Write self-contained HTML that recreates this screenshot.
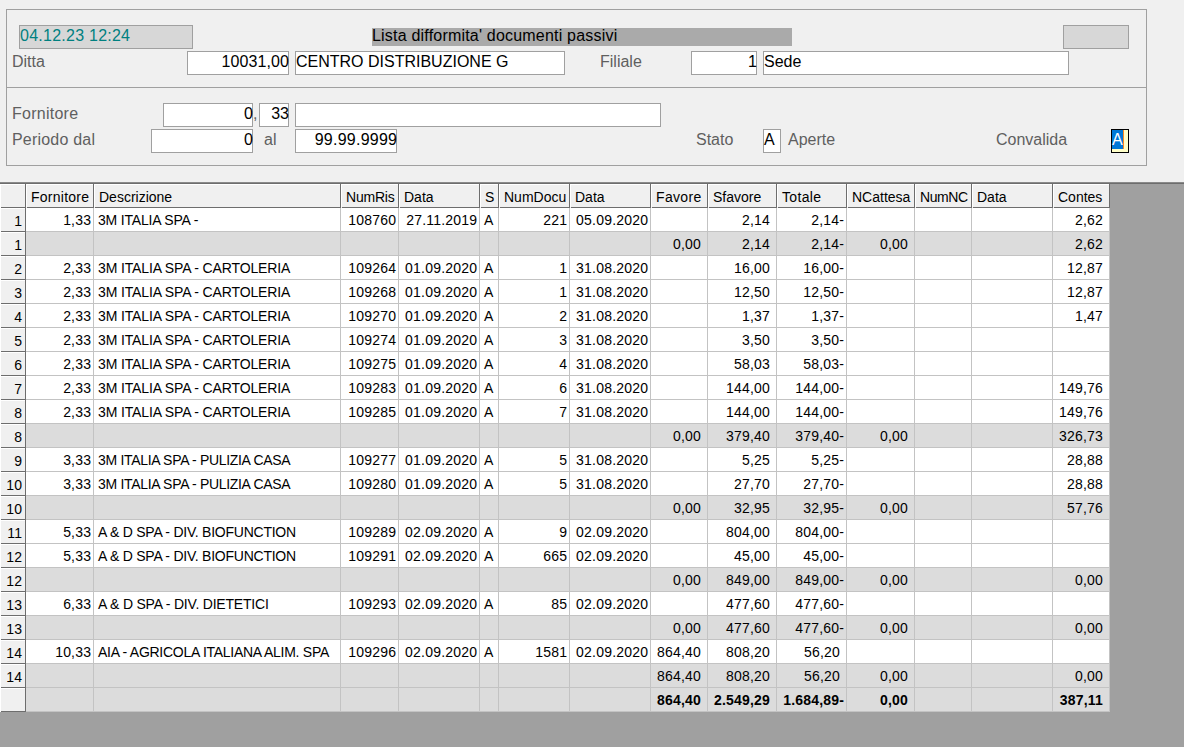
<!DOCTYPE html>
<html><head><meta charset="utf-8"><style>
html,body{margin:0;padding:0;}
body{width:1184px;height:747px;position:relative;overflow:hidden;background:#f0f0f0;font-family:"Liberation Sans",sans-serif;}
.a{position:absolute;box-sizing:border-box;}
.t{position:absolute;white-space:nowrap;}
</style></head><body>
<div class="a" style="left:6px;top:9px;width:1141px;height:157px;box-shadow:inset 0 0 0 1px #a0a0a0;"></div><div class="a" style="left:7px;top:87px;width:1139px;height:1px;background:#a0a0a0;"></div><div class="a" style="left:19px;top:25px;width:174px;height:24px;background:#d7d7d7;box-shadow:inset 0 0 0 1px #a0a0a0;"></div><div class="t" style="top:28.46px;font-size:16px;line-height:16px;color:#008080;letter-spacing:0.25px;left:20px;">04.12.23 12:24</div><div class="a" style="left:372px;top:28px;width:420px;height:18px;background:#aaaaaa;"></div><div class="t" style="top:28.46px;font-size:16px;line-height:16px;color:#000;letter-spacing:0.2px;left:372px;">Lista difformita' documenti passivi</div><div class="a" style="left:1063px;top:25px;width:66px;height:24px;background:#d7d7d7;box-shadow:inset 0 0 0 1px #a0a0a0;"></div><div class="t" style="top:54.46px;font-size:16px;line-height:16px;color:#5f5f5f;left:12px;">Ditta</div><div class="a" style="left:187px;top:51px;width:102px;height:24px;background:#fff;box-shadow:inset 0 0 0 1px #a0a0a0;"></div><div class="t" style="top:54.46px;font-size:16px;line-height:16px;color:#000;letter-spacing:0.1px;margin-right:-0.1px;right:895px;text-align:right;">10031,00</div><div class="a" style="left:295px;top:51px;width:270px;height:24px;background:#fff;box-shadow:inset 0 0 0 1px #a0a0a0;"></div><div class="t" style="top:54.46px;font-size:16px;line-height:16px;color:#000;left:296px;">CENTRO DISTRIBUZIONE G</div><div class="t" style="top:54.46px;font-size:16px;line-height:16px;color:#5f5f5f;left:600px;">Filiale</div><div class="a" style="left:691px;top:51px;width:66px;height:24px;background:#fff;box-shadow:inset 0 0 0 1px #a0a0a0;"></div><div class="t" style="top:54.46px;font-size:16px;line-height:16px;color:#000;right:427px;text-align:right;">1</div><div class="a" style="left:763px;top:51px;width:306px;height:24px;background:#fff;box-shadow:inset 0 0 0 1px #a0a0a0;"></div><div class="t" style="top:54.46px;font-size:16px;line-height:16px;color:#000;left:764px;">Sede</div><div class="t" style="top:106.46px;font-size:16px;line-height:16px;color:#5f5f5f;letter-spacing:0.25px;left:12px;">Fornitore</div><div class="a" style="left:163px;top:103px;width:90px;height:24px;background:#fff;box-shadow:inset 0 0 0 1px #a0a0a0;"></div><div class="t" style="top:106.46px;font-size:16px;line-height:16px;color:#000;right:931px;text-align:right;">0</div><div class="t" style="top:106.46px;font-size:16px;line-height:16px;color:#5f5f5f;left:253px;">,</div><div class="a" style="left:259px;top:103px;width:30px;height:24px;background:#fff;box-shadow:inset 0 0 0 1px #a0a0a0;"></div><div class="t" style="top:106.46px;font-size:16px;line-height:16px;color:#000;right:895px;text-align:right;">33</div><div class="a" style="left:295px;top:103px;width:366px;height:24px;background:#fff;box-shadow:inset 0 0 0 1px #a0a0a0;"></div><div class="t" style="top:132.46px;font-size:16px;line-height:16px;color:#5f5f5f;letter-spacing:0.2px;left:12px;">Periodo dal</div><div class="a" style="left:151px;top:129px;width:102px;height:24px;background:#fff;box-shadow:inset 0 0 0 1px #a0a0a0;"></div><div class="t" style="top:132.46px;font-size:16px;line-height:16px;color:#000;right:931px;text-align:right;">0</div><div class="t" style="top:132.46px;font-size:16px;line-height:16px;color:#5f5f5f;left:264px;">al</div><div class="a" style="left:295px;top:129px;width:102px;height:24px;background:#fff;box-shadow:inset 0 0 0 1px #a0a0a0;"></div><div class="t" style="top:132.46px;font-size:16px;line-height:16px;color:#000;letter-spacing:0.25px;margin-right:-0.25px;right:787px;text-align:right;">99.99.9999</div><div class="t" style="top:132.46px;font-size:16px;line-height:16px;color:#5f5f5f;left:696px;">Stato</div><div class="a" style="left:763px;top:129px;width:18px;height:24px;background:#fff;box-shadow:inset 0 0 0 1px #a0a0a0;"></div><div class="t" style="top:132.46px;font-size:16px;line-height:16px;color:#000;left:764px;">A</div><div class="t" style="top:132.46px;font-size:16px;line-height:16px;color:#5f5f5f;left:788px;">Aperte</div><div class="t" style="top:132.46px;font-size:16px;line-height:16px;color:#5f5f5f;left:996px;">Convalida</div><div class="a" style="left:1111px;top:129px;width:18px;height:24px;background:#ffffc8;box-shadow:inset 0 0 0 1px #000;"></div><div class="a" style="left:1112px;top:130px;width:11px;height:19px;background:#0078d7;"></div><div class="a" style="left:1123px;top:130px;width:1px;height:19px;background:#ff8a1e;"></div><div class="t" style="top:132.46px;font-size:16px;line-height:16px;color:#fff;left:1112px;">A</div><div class="a" style="left:0px;top:182px;width:1184px;height:565px;background:#a0a0a0;"></div><div class="a" style="left:0px;top:182px;width:1184px;height:1px;background:#8a8a8a;"></div><div class="a" style="left:0px;top:183px;width:1184px;height:1px;background:#6d6d6d;"></div><div class="a" style="left:0px;top:184px;width:1110px;height:24px;background:#f0f0f0;"></div><div class="a" style="left:0px;top:184px;width:25px;height:23px;background:#f0f0f0;"></div><div class="t" style="top:190.15px;font-size:14px;line-height:14px;color:#000;letter-spacing:0.25px;left:31px;">Fornitore</div><div class="t" style="top:190.15px;font-size:14px;line-height:14px;color:#000;left:99px;">Descrizione</div><div class="t" style="top:190.15px;font-size:14px;line-height:14px;color:#000;letter-spacing:-0.2px;left:346px;">NumRis</div><div class="t" style="top:190.15px;font-size:14px;line-height:14px;color:#000;left:404px;">Data</div><div class="t" style="top:190.15px;font-size:14px;line-height:14px;color:#000;left:485px;">S</div><div class="t" style="top:190.15px;font-size:14px;line-height:14px;color:#000;left:504px;">NumDocu</div><div class="t" style="top:190.15px;font-size:14px;line-height:14px;color:#000;left:575px;">Data</div><div class="t" style="top:190.15px;font-size:14px;line-height:14px;color:#000;letter-spacing:0.33px;left:656px;">Favore</div><div class="t" style="top:190.15px;font-size:14px;line-height:14px;color:#000;left:713px;">Sfavore</div><div class="t" style="top:190.15px;font-size:14px;line-height:14px;color:#000;letter-spacing:0.33px;left:782px;">Totale</div><div class="t" style="top:190.15px;font-size:14px;line-height:14px;color:#000;left:852px;">NCattesa</div><div class="t" style="top:190.15px;font-size:14px;line-height:14px;color:#000;letter-spacing:-0.4px;left:920px;">NumNC</div><div class="t" style="top:190.15px;font-size:14px;line-height:14px;color:#000;left:977px;">Data</div><div class="t" style="top:190.15px;font-size:14px;line-height:14px;color:#000;left:1058px;">Contes</div><div class="a" style="left:0px;top:184px;width:1109px;height:1px;background:#fff;"></div><div class="a" style="left:25px;top:184px;width:1px;height:24px;background:#6d6d6d;"></div><div class="a" style="left:93px;top:184px;width:1px;height:24px;background:#6d6d6d;"></div><div class="a" style="left:340px;top:184px;width:1px;height:24px;background:#6d6d6d;"></div><div class="a" style="left:398px;top:184px;width:1px;height:24px;background:#6d6d6d;"></div><div class="a" style="left:479px;top:184px;width:1px;height:24px;background:#6d6d6d;"></div><div class="a" style="left:498px;top:184px;width:1px;height:24px;background:#6d6d6d;"></div><div class="a" style="left:569px;top:184px;width:1px;height:24px;background:#6d6d6d;"></div><div class="a" style="left:650px;top:184px;width:1px;height:24px;background:#6d6d6d;"></div><div class="a" style="left:707px;top:184px;width:1px;height:24px;background:#6d6d6d;"></div><div class="a" style="left:776px;top:184px;width:1px;height:24px;background:#6d6d6d;"></div><div class="a" style="left:846px;top:184px;width:1px;height:24px;background:#6d6d6d;"></div><div class="a" style="left:914px;top:184px;width:1px;height:24px;background:#6d6d6d;"></div><div class="a" style="left:971px;top:184px;width:1px;height:24px;background:#6d6d6d;"></div><div class="a" style="left:1052px;top:184px;width:1px;height:24px;background:#6d6d6d;"></div><div class="a" style="left:1109px;top:184px;width:1px;height:24px;background:#6d6d6d;"></div><div class="a" style="left:26px;top:184px;width:1px;height:23px;background:#fff;"></div><div class="a" style="left:27px;top:207px;width:66px;height:1px;background:#6d6d6d;"></div><div class="a" style="left:94px;top:184px;width:1px;height:23px;background:#fff;"></div><div class="a" style="left:95px;top:207px;width:245px;height:1px;background:#6d6d6d;"></div><div class="a" style="left:341px;top:184px;width:1px;height:23px;background:#fff;"></div><div class="a" style="left:342px;top:207px;width:56px;height:1px;background:#6d6d6d;"></div><div class="a" style="left:399px;top:184px;width:1px;height:23px;background:#fff;"></div><div class="a" style="left:400px;top:207px;width:79px;height:1px;background:#6d6d6d;"></div><div class="a" style="left:480px;top:184px;width:1px;height:23px;background:#fff;"></div><div class="a" style="left:481px;top:207px;width:17px;height:1px;background:#6d6d6d;"></div><div class="a" style="left:499px;top:184px;width:1px;height:23px;background:#fff;"></div><div class="a" style="left:500px;top:207px;width:69px;height:1px;background:#6d6d6d;"></div><div class="a" style="left:570px;top:184px;width:1px;height:23px;background:#fff;"></div><div class="a" style="left:571px;top:207px;width:79px;height:1px;background:#6d6d6d;"></div><div class="a" style="left:651px;top:184px;width:1px;height:23px;background:#fff;"></div><div class="a" style="left:652px;top:207px;width:55px;height:1px;background:#6d6d6d;"></div><div class="a" style="left:708px;top:184px;width:1px;height:23px;background:#fff;"></div><div class="a" style="left:709px;top:207px;width:67px;height:1px;background:#6d6d6d;"></div><div class="a" style="left:777px;top:184px;width:1px;height:23px;background:#fff;"></div><div class="a" style="left:778px;top:207px;width:68px;height:1px;background:#6d6d6d;"></div><div class="a" style="left:847px;top:184px;width:1px;height:23px;background:#fff;"></div><div class="a" style="left:848px;top:207px;width:66px;height:1px;background:#6d6d6d;"></div><div class="a" style="left:915px;top:184px;width:1px;height:23px;background:#fff;"></div><div class="a" style="left:916px;top:207px;width:55px;height:1px;background:#6d6d6d;"></div><div class="a" style="left:972px;top:184px;width:1px;height:23px;background:#fff;"></div><div class="a" style="left:973px;top:207px;width:79px;height:1px;background:#6d6d6d;"></div><div class="a" style="left:1053px;top:184px;width:1px;height:23px;background:#fff;"></div><div class="a" style="left:1054px;top:207px;width:55px;height:1px;background:#6d6d6d;"></div><div class="a" style="left:1px;top:207px;width:24px;height:1px;background:#6d6d6d;"></div><div class="a" style="left:26px;top:208px;width:1084px;height:24px;background:#fff;"></div><div class="a" style="left:0px;top:208px;width:25px;height:23px;background:#f0f0f0;"></div><div class="a" style="left:0px;top:208px;width:25px;height:1px;background:#fff;"></div><div class="a" style="left:0px;top:208px;width:1px;height:23px;background:#fff;"></div><div class="a" style="left:1px;top:231px;width:24px;height:1px;background:#6d6d6d;"></div><div class="t" style="top:214.15px;font-size:14px;line-height:14px;color:#000;letter-spacing:0.2px;margin-right:-0.2px;right:1162px;text-align:right;">1</div><div class="a" style="left:26px;top:231px;width:1084px;height:1px;background:#c3c3c3;"></div><div class="t" style="top:213.15px;font-size:14px;line-height:14px;color:#000;letter-spacing:0.2px;margin-right:-0.2px;right:1093px;text-align:right;">1,33</div><div class="t" style="top:213.15px;font-size:14px;line-height:14px;color:#000;letter-spacing:-0.19px;left:98px;">3M ITALIA SPA -</div><div class="t" style="top:213.15px;font-size:14px;line-height:14px;color:#000;letter-spacing:0.2px;margin-right:-0.2px;right:788px;text-align:right;">108760</div><div class="t" style="top:213.15px;font-size:14px;line-height:14px;color:#000;letter-spacing:0.2px;margin-right:-0.2px;right:707px;text-align:right;">27.11.2019</div><div class="t" style="top:213.15px;font-size:14px;line-height:14px;color:#000;left:484px;">A</div><div class="t" style="top:213.15px;font-size:14px;line-height:14px;color:#000;letter-spacing:0.2px;margin-right:-0.2px;right:617px;text-align:right;">221</div><div class="t" style="top:213.15px;font-size:14px;line-height:14px;color:#000;letter-spacing:0.2px;margin-right:-0.2px;right:536px;text-align:right;">05.09.2020</div><div class="t" style="top:213.15px;font-size:14px;line-height:14px;color:#000;letter-spacing:0.2px;margin-right:-0.2px;right:414.20000000000005px;text-align:right;">2,14</div><div class="t" style="top:213.15px;font-size:14px;line-height:14px;color:#000;letter-spacing:0.2px;margin-right:-0.2px;right:340px;text-align:right;">2,14-</div><div class="t" style="top:213.15px;font-size:14px;line-height:14px;color:#000;letter-spacing:0.2px;margin-right:-0.2px;right:81.20000000000005px;text-align:right;">2,62</div><div class="a" style="left:26px;top:232px;width:1084px;height:24px;background:#dcdcdc;"></div><div class="a" style="left:0px;top:232px;width:25px;height:23px;background:#f0f0f0;"></div><div class="a" style="left:0px;top:232px;width:25px;height:1px;background:#fff;"></div><div class="a" style="left:0px;top:232px;width:1px;height:23px;background:#fff;"></div><div class="a" style="left:1px;top:255px;width:24px;height:1px;background:#6d6d6d;"></div><div class="t" style="top:238.15px;font-size:14px;line-height:14px;color:#000;letter-spacing:0.2px;margin-right:-0.2px;right:1162px;text-align:right;">1</div><div class="a" style="left:26px;top:255px;width:1084px;height:1px;background:#c3c3c3;"></div><div class="t" style="top:237.15px;font-size:14px;line-height:14px;color:#000;letter-spacing:0.2px;margin-right:-0.2px;right:483.20000000000005px;text-align:right;">0,00</div><div class="t" style="top:237.15px;font-size:14px;line-height:14px;color:#000;letter-spacing:0.2px;margin-right:-0.2px;right:414.20000000000005px;text-align:right;">2,14</div><div class="t" style="top:237.15px;font-size:14px;line-height:14px;color:#000;letter-spacing:0.2px;margin-right:-0.2px;right:340px;text-align:right;">2,14-</div><div class="t" style="top:237.15px;font-size:14px;line-height:14px;color:#000;letter-spacing:0.2px;margin-right:-0.2px;right:276.20000000000005px;text-align:right;">0,00</div><div class="t" style="top:237.15px;font-size:14px;line-height:14px;color:#000;letter-spacing:0.2px;margin-right:-0.2px;right:81.20000000000005px;text-align:right;">2,62</div><div class="a" style="left:26px;top:256px;width:1084px;height:24px;background:#fff;"></div><div class="a" style="left:0px;top:256px;width:25px;height:23px;background:#f0f0f0;"></div><div class="a" style="left:0px;top:256px;width:25px;height:1px;background:#fff;"></div><div class="a" style="left:0px;top:256px;width:1px;height:23px;background:#fff;"></div><div class="a" style="left:1px;top:279px;width:24px;height:1px;background:#6d6d6d;"></div><div class="t" style="top:262.15px;font-size:14px;line-height:14px;color:#000;letter-spacing:0.2px;margin-right:-0.2px;right:1162px;text-align:right;">2</div><div class="a" style="left:26px;top:279px;width:1084px;height:1px;background:#c3c3c3;"></div><div class="t" style="top:261.15px;font-size:14px;line-height:14px;color:#000;letter-spacing:0.2px;margin-right:-0.2px;right:1093px;text-align:right;">2,33</div><div class="t" style="top:261.15px;font-size:14px;line-height:14px;color:#000;letter-spacing:-0.14px;left:98px;">3M ITALIA SPA - CARTOLERIA</div><div class="t" style="top:261.15px;font-size:14px;line-height:14px;color:#000;letter-spacing:0.2px;margin-right:-0.2px;right:788px;text-align:right;">109264</div><div class="t" style="top:261.15px;font-size:14px;line-height:14px;color:#000;letter-spacing:0.2px;margin-right:-0.2px;right:707px;text-align:right;">01.09.2020</div><div class="t" style="top:261.15px;font-size:14px;line-height:14px;color:#000;left:484px;">A</div><div class="t" style="top:261.15px;font-size:14px;line-height:14px;color:#000;letter-spacing:0.2px;margin-right:-0.2px;right:617px;text-align:right;">1</div><div class="t" style="top:261.15px;font-size:14px;line-height:14px;color:#000;letter-spacing:0.2px;margin-right:-0.2px;right:536px;text-align:right;">31.08.2020</div><div class="t" style="top:261.15px;font-size:14px;line-height:14px;color:#000;letter-spacing:0.2px;margin-right:-0.2px;right:414.20000000000005px;text-align:right;">16,00</div><div class="t" style="top:261.15px;font-size:14px;line-height:14px;color:#000;letter-spacing:0.2px;margin-right:-0.2px;right:340px;text-align:right;">16,00-</div><div class="t" style="top:261.15px;font-size:14px;line-height:14px;color:#000;letter-spacing:0.2px;margin-right:-0.2px;right:81.20000000000005px;text-align:right;">12,87</div><div class="a" style="left:26px;top:280px;width:1084px;height:24px;background:#fff;"></div><div class="a" style="left:0px;top:280px;width:25px;height:23px;background:#f0f0f0;"></div><div class="a" style="left:0px;top:280px;width:25px;height:1px;background:#fff;"></div><div class="a" style="left:0px;top:280px;width:1px;height:23px;background:#fff;"></div><div class="a" style="left:1px;top:303px;width:24px;height:1px;background:#6d6d6d;"></div><div class="t" style="top:286.15px;font-size:14px;line-height:14px;color:#000;letter-spacing:0.2px;margin-right:-0.2px;right:1162px;text-align:right;">3</div><div class="a" style="left:26px;top:303px;width:1084px;height:1px;background:#c3c3c3;"></div><div class="t" style="top:285.15px;font-size:14px;line-height:14px;color:#000;letter-spacing:0.2px;margin-right:-0.2px;right:1093px;text-align:right;">2,33</div><div class="t" style="top:285.15px;font-size:14px;line-height:14px;color:#000;letter-spacing:-0.14px;left:98px;">3M ITALIA SPA - CARTOLERIA</div><div class="t" style="top:285.15px;font-size:14px;line-height:14px;color:#000;letter-spacing:0.2px;margin-right:-0.2px;right:788px;text-align:right;">109268</div><div class="t" style="top:285.15px;font-size:14px;line-height:14px;color:#000;letter-spacing:0.2px;margin-right:-0.2px;right:707px;text-align:right;">01.09.2020</div><div class="t" style="top:285.15px;font-size:14px;line-height:14px;color:#000;left:484px;">A</div><div class="t" style="top:285.15px;font-size:14px;line-height:14px;color:#000;letter-spacing:0.2px;margin-right:-0.2px;right:617px;text-align:right;">1</div><div class="t" style="top:285.15px;font-size:14px;line-height:14px;color:#000;letter-spacing:0.2px;margin-right:-0.2px;right:536px;text-align:right;">31.08.2020</div><div class="t" style="top:285.15px;font-size:14px;line-height:14px;color:#000;letter-spacing:0.2px;margin-right:-0.2px;right:414.20000000000005px;text-align:right;">12,50</div><div class="t" style="top:285.15px;font-size:14px;line-height:14px;color:#000;letter-spacing:0.2px;margin-right:-0.2px;right:340px;text-align:right;">12,50-</div><div class="t" style="top:285.15px;font-size:14px;line-height:14px;color:#000;letter-spacing:0.2px;margin-right:-0.2px;right:81.20000000000005px;text-align:right;">12,87</div><div class="a" style="left:26px;top:304px;width:1084px;height:24px;background:#fff;"></div><div class="a" style="left:0px;top:304px;width:25px;height:23px;background:#f0f0f0;"></div><div class="a" style="left:0px;top:304px;width:25px;height:1px;background:#fff;"></div><div class="a" style="left:0px;top:304px;width:1px;height:23px;background:#fff;"></div><div class="a" style="left:1px;top:327px;width:24px;height:1px;background:#6d6d6d;"></div><div class="t" style="top:310.15px;font-size:14px;line-height:14px;color:#000;letter-spacing:0.2px;margin-right:-0.2px;right:1162px;text-align:right;">4</div><div class="a" style="left:26px;top:327px;width:1084px;height:1px;background:#c3c3c3;"></div><div class="t" style="top:309.15px;font-size:14px;line-height:14px;color:#000;letter-spacing:0.2px;margin-right:-0.2px;right:1093px;text-align:right;">2,33</div><div class="t" style="top:309.15px;font-size:14px;line-height:14px;color:#000;letter-spacing:-0.14px;left:98px;">3M ITALIA SPA - CARTOLERIA</div><div class="t" style="top:309.15px;font-size:14px;line-height:14px;color:#000;letter-spacing:0.2px;margin-right:-0.2px;right:788px;text-align:right;">109270</div><div class="t" style="top:309.15px;font-size:14px;line-height:14px;color:#000;letter-spacing:0.2px;margin-right:-0.2px;right:707px;text-align:right;">01.09.2020</div><div class="t" style="top:309.15px;font-size:14px;line-height:14px;color:#000;left:484px;">A</div><div class="t" style="top:309.15px;font-size:14px;line-height:14px;color:#000;letter-spacing:0.2px;margin-right:-0.2px;right:617px;text-align:right;">2</div><div class="t" style="top:309.15px;font-size:14px;line-height:14px;color:#000;letter-spacing:0.2px;margin-right:-0.2px;right:536px;text-align:right;">31.08.2020</div><div class="t" style="top:309.15px;font-size:14px;line-height:14px;color:#000;letter-spacing:0.2px;margin-right:-0.2px;right:414.20000000000005px;text-align:right;">1,37</div><div class="t" style="top:309.15px;font-size:14px;line-height:14px;color:#000;letter-spacing:0.2px;margin-right:-0.2px;right:340px;text-align:right;">1,37-</div><div class="t" style="top:309.15px;font-size:14px;line-height:14px;color:#000;letter-spacing:0.2px;margin-right:-0.2px;right:81.20000000000005px;text-align:right;">1,47</div><div class="a" style="left:26px;top:328px;width:1084px;height:24px;background:#fff;"></div><div class="a" style="left:0px;top:328px;width:25px;height:23px;background:#f0f0f0;"></div><div class="a" style="left:0px;top:328px;width:25px;height:1px;background:#fff;"></div><div class="a" style="left:0px;top:328px;width:1px;height:23px;background:#fff;"></div><div class="a" style="left:1px;top:351px;width:24px;height:1px;background:#6d6d6d;"></div><div class="t" style="top:334.15px;font-size:14px;line-height:14px;color:#000;letter-spacing:0.2px;margin-right:-0.2px;right:1162px;text-align:right;">5</div><div class="a" style="left:26px;top:351px;width:1084px;height:1px;background:#c3c3c3;"></div><div class="t" style="top:333.15px;font-size:14px;line-height:14px;color:#000;letter-spacing:0.2px;margin-right:-0.2px;right:1093px;text-align:right;">2,33</div><div class="t" style="top:333.15px;font-size:14px;line-height:14px;color:#000;letter-spacing:-0.14px;left:98px;">3M ITALIA SPA - CARTOLERIA</div><div class="t" style="top:333.15px;font-size:14px;line-height:14px;color:#000;letter-spacing:0.2px;margin-right:-0.2px;right:788px;text-align:right;">109274</div><div class="t" style="top:333.15px;font-size:14px;line-height:14px;color:#000;letter-spacing:0.2px;margin-right:-0.2px;right:707px;text-align:right;">01.09.2020</div><div class="t" style="top:333.15px;font-size:14px;line-height:14px;color:#000;left:484px;">A</div><div class="t" style="top:333.15px;font-size:14px;line-height:14px;color:#000;letter-spacing:0.2px;margin-right:-0.2px;right:617px;text-align:right;">3</div><div class="t" style="top:333.15px;font-size:14px;line-height:14px;color:#000;letter-spacing:0.2px;margin-right:-0.2px;right:536px;text-align:right;">31.08.2020</div><div class="t" style="top:333.15px;font-size:14px;line-height:14px;color:#000;letter-spacing:0.2px;margin-right:-0.2px;right:414.20000000000005px;text-align:right;">3,50</div><div class="t" style="top:333.15px;font-size:14px;line-height:14px;color:#000;letter-spacing:0.2px;margin-right:-0.2px;right:340px;text-align:right;">3,50-</div><div class="a" style="left:26px;top:352px;width:1084px;height:24px;background:#fff;"></div><div class="a" style="left:0px;top:352px;width:25px;height:23px;background:#f0f0f0;"></div><div class="a" style="left:0px;top:352px;width:25px;height:1px;background:#fff;"></div><div class="a" style="left:0px;top:352px;width:1px;height:23px;background:#fff;"></div><div class="a" style="left:1px;top:375px;width:24px;height:1px;background:#6d6d6d;"></div><div class="t" style="top:358.15px;font-size:14px;line-height:14px;color:#000;letter-spacing:0.2px;margin-right:-0.2px;right:1162px;text-align:right;">6</div><div class="a" style="left:26px;top:375px;width:1084px;height:1px;background:#c3c3c3;"></div><div class="t" style="top:357.15px;font-size:14px;line-height:14px;color:#000;letter-spacing:0.2px;margin-right:-0.2px;right:1093px;text-align:right;">2,33</div><div class="t" style="top:357.15px;font-size:14px;line-height:14px;color:#000;letter-spacing:-0.14px;left:98px;">3M ITALIA SPA - CARTOLERIA</div><div class="t" style="top:357.15px;font-size:14px;line-height:14px;color:#000;letter-spacing:0.2px;margin-right:-0.2px;right:788px;text-align:right;">109275</div><div class="t" style="top:357.15px;font-size:14px;line-height:14px;color:#000;letter-spacing:0.2px;margin-right:-0.2px;right:707px;text-align:right;">01.09.2020</div><div class="t" style="top:357.15px;font-size:14px;line-height:14px;color:#000;left:484px;">A</div><div class="t" style="top:357.15px;font-size:14px;line-height:14px;color:#000;letter-spacing:0.2px;margin-right:-0.2px;right:617px;text-align:right;">4</div><div class="t" style="top:357.15px;font-size:14px;line-height:14px;color:#000;letter-spacing:0.2px;margin-right:-0.2px;right:536px;text-align:right;">31.08.2020</div><div class="t" style="top:357.15px;font-size:14px;line-height:14px;color:#000;letter-spacing:0.2px;margin-right:-0.2px;right:414.20000000000005px;text-align:right;">58,03</div><div class="t" style="top:357.15px;font-size:14px;line-height:14px;color:#000;letter-spacing:0.2px;margin-right:-0.2px;right:340px;text-align:right;">58,03-</div><div class="a" style="left:26px;top:376px;width:1084px;height:24px;background:#fff;"></div><div class="a" style="left:0px;top:376px;width:25px;height:23px;background:#f0f0f0;"></div><div class="a" style="left:0px;top:376px;width:25px;height:1px;background:#fff;"></div><div class="a" style="left:0px;top:376px;width:1px;height:23px;background:#fff;"></div><div class="a" style="left:1px;top:399px;width:24px;height:1px;background:#6d6d6d;"></div><div class="t" style="top:382.15px;font-size:14px;line-height:14px;color:#000;letter-spacing:0.2px;margin-right:-0.2px;right:1162px;text-align:right;">7</div><div class="a" style="left:26px;top:399px;width:1084px;height:1px;background:#c3c3c3;"></div><div class="t" style="top:381.15px;font-size:14px;line-height:14px;color:#000;letter-spacing:0.2px;margin-right:-0.2px;right:1093px;text-align:right;">2,33</div><div class="t" style="top:381.15px;font-size:14px;line-height:14px;color:#000;letter-spacing:-0.14px;left:98px;">3M ITALIA SPA - CARTOLERIA</div><div class="t" style="top:381.15px;font-size:14px;line-height:14px;color:#000;letter-spacing:0.2px;margin-right:-0.2px;right:788px;text-align:right;">109283</div><div class="t" style="top:381.15px;font-size:14px;line-height:14px;color:#000;letter-spacing:0.2px;margin-right:-0.2px;right:707px;text-align:right;">01.09.2020</div><div class="t" style="top:381.15px;font-size:14px;line-height:14px;color:#000;left:484px;">A</div><div class="t" style="top:381.15px;font-size:14px;line-height:14px;color:#000;letter-spacing:0.2px;margin-right:-0.2px;right:617px;text-align:right;">6</div><div class="t" style="top:381.15px;font-size:14px;line-height:14px;color:#000;letter-spacing:0.2px;margin-right:-0.2px;right:536px;text-align:right;">31.08.2020</div><div class="t" style="top:381.15px;font-size:14px;line-height:14px;color:#000;letter-spacing:0.2px;margin-right:-0.2px;right:414.20000000000005px;text-align:right;">144,00</div><div class="t" style="top:381.15px;font-size:14px;line-height:14px;color:#000;letter-spacing:0.2px;margin-right:-0.2px;right:340px;text-align:right;">144,00-</div><div class="t" style="top:381.15px;font-size:14px;line-height:14px;color:#000;letter-spacing:0.2px;margin-right:-0.2px;right:81.20000000000005px;text-align:right;">149,76</div><div class="a" style="left:26px;top:400px;width:1084px;height:24px;background:#fff;"></div><div class="a" style="left:0px;top:400px;width:25px;height:23px;background:#f0f0f0;"></div><div class="a" style="left:0px;top:400px;width:25px;height:1px;background:#fff;"></div><div class="a" style="left:0px;top:400px;width:1px;height:23px;background:#fff;"></div><div class="a" style="left:1px;top:423px;width:24px;height:1px;background:#6d6d6d;"></div><div class="t" style="top:406.15px;font-size:14px;line-height:14px;color:#000;letter-spacing:0.2px;margin-right:-0.2px;right:1162px;text-align:right;">8</div><div class="a" style="left:26px;top:423px;width:1084px;height:1px;background:#c3c3c3;"></div><div class="t" style="top:405.15px;font-size:14px;line-height:14px;color:#000;letter-spacing:0.2px;margin-right:-0.2px;right:1093px;text-align:right;">2,33</div><div class="t" style="top:405.15px;font-size:14px;line-height:14px;color:#000;letter-spacing:-0.14px;left:98px;">3M ITALIA SPA - CARTOLERIA</div><div class="t" style="top:405.15px;font-size:14px;line-height:14px;color:#000;letter-spacing:0.2px;margin-right:-0.2px;right:788px;text-align:right;">109285</div><div class="t" style="top:405.15px;font-size:14px;line-height:14px;color:#000;letter-spacing:0.2px;margin-right:-0.2px;right:707px;text-align:right;">01.09.2020</div><div class="t" style="top:405.15px;font-size:14px;line-height:14px;color:#000;left:484px;">A</div><div class="t" style="top:405.15px;font-size:14px;line-height:14px;color:#000;letter-spacing:0.2px;margin-right:-0.2px;right:617px;text-align:right;">7</div><div class="t" style="top:405.15px;font-size:14px;line-height:14px;color:#000;letter-spacing:0.2px;margin-right:-0.2px;right:536px;text-align:right;">31.08.2020</div><div class="t" style="top:405.15px;font-size:14px;line-height:14px;color:#000;letter-spacing:0.2px;margin-right:-0.2px;right:414.20000000000005px;text-align:right;">144,00</div><div class="t" style="top:405.15px;font-size:14px;line-height:14px;color:#000;letter-spacing:0.2px;margin-right:-0.2px;right:340px;text-align:right;">144,00-</div><div class="t" style="top:405.15px;font-size:14px;line-height:14px;color:#000;letter-spacing:0.2px;margin-right:-0.2px;right:81.20000000000005px;text-align:right;">149,76</div><div class="a" style="left:26px;top:424px;width:1084px;height:24px;background:#dcdcdc;"></div><div class="a" style="left:0px;top:424px;width:25px;height:23px;background:#f0f0f0;"></div><div class="a" style="left:0px;top:424px;width:25px;height:1px;background:#fff;"></div><div class="a" style="left:0px;top:424px;width:1px;height:23px;background:#fff;"></div><div class="a" style="left:1px;top:447px;width:24px;height:1px;background:#6d6d6d;"></div><div class="t" style="top:430.15px;font-size:14px;line-height:14px;color:#000;letter-spacing:0.2px;margin-right:-0.2px;right:1162px;text-align:right;">8</div><div class="a" style="left:26px;top:447px;width:1084px;height:1px;background:#c3c3c3;"></div><div class="t" style="top:429.15px;font-size:14px;line-height:14px;color:#000;letter-spacing:0.2px;margin-right:-0.2px;right:483.20000000000005px;text-align:right;">0,00</div><div class="t" style="top:429.15px;font-size:14px;line-height:14px;color:#000;letter-spacing:0.2px;margin-right:-0.2px;right:414.20000000000005px;text-align:right;">379,40</div><div class="t" style="top:429.15px;font-size:14px;line-height:14px;color:#000;letter-spacing:0.2px;margin-right:-0.2px;right:340px;text-align:right;">379,40-</div><div class="t" style="top:429.15px;font-size:14px;line-height:14px;color:#000;letter-spacing:0.2px;margin-right:-0.2px;right:276.20000000000005px;text-align:right;">0,00</div><div class="t" style="top:429.15px;font-size:14px;line-height:14px;color:#000;letter-spacing:0.2px;margin-right:-0.2px;right:81.20000000000005px;text-align:right;">326,73</div><div class="a" style="left:26px;top:448px;width:1084px;height:24px;background:#fff;"></div><div class="a" style="left:0px;top:448px;width:25px;height:23px;background:#f0f0f0;"></div><div class="a" style="left:0px;top:448px;width:25px;height:1px;background:#fff;"></div><div class="a" style="left:0px;top:448px;width:1px;height:23px;background:#fff;"></div><div class="a" style="left:1px;top:471px;width:24px;height:1px;background:#6d6d6d;"></div><div class="t" style="top:454.15px;font-size:14px;line-height:14px;color:#000;letter-spacing:0.2px;margin-right:-0.2px;right:1162px;text-align:right;">9</div><div class="a" style="left:26px;top:471px;width:1084px;height:1px;background:#c3c3c3;"></div><div class="t" style="top:453.15px;font-size:14px;line-height:14px;color:#000;letter-spacing:0.2px;margin-right:-0.2px;right:1093px;text-align:right;">3,33</div><div class="t" style="top:453.15px;font-size:14px;line-height:14px;color:#000;letter-spacing:-0.31px;left:98px;">3M ITALIA SPA - PULIZIA CASA</div><div class="t" style="top:453.15px;font-size:14px;line-height:14px;color:#000;letter-spacing:0.2px;margin-right:-0.2px;right:788px;text-align:right;">109277</div><div class="t" style="top:453.15px;font-size:14px;line-height:14px;color:#000;letter-spacing:0.2px;margin-right:-0.2px;right:707px;text-align:right;">01.09.2020</div><div class="t" style="top:453.15px;font-size:14px;line-height:14px;color:#000;left:484px;">A</div><div class="t" style="top:453.15px;font-size:14px;line-height:14px;color:#000;letter-spacing:0.2px;margin-right:-0.2px;right:617px;text-align:right;">5</div><div class="t" style="top:453.15px;font-size:14px;line-height:14px;color:#000;letter-spacing:0.2px;margin-right:-0.2px;right:536px;text-align:right;">31.08.2020</div><div class="t" style="top:453.15px;font-size:14px;line-height:14px;color:#000;letter-spacing:0.2px;margin-right:-0.2px;right:414.20000000000005px;text-align:right;">5,25</div><div class="t" style="top:453.15px;font-size:14px;line-height:14px;color:#000;letter-spacing:0.2px;margin-right:-0.2px;right:340px;text-align:right;">5,25-</div><div class="t" style="top:453.15px;font-size:14px;line-height:14px;color:#000;letter-spacing:0.2px;margin-right:-0.2px;right:81.20000000000005px;text-align:right;">28,88</div><div class="a" style="left:26px;top:472px;width:1084px;height:24px;background:#fff;"></div><div class="a" style="left:0px;top:472px;width:25px;height:23px;background:#f0f0f0;"></div><div class="a" style="left:0px;top:472px;width:25px;height:1px;background:#fff;"></div><div class="a" style="left:0px;top:472px;width:1px;height:23px;background:#fff;"></div><div class="a" style="left:1px;top:495px;width:24px;height:1px;background:#6d6d6d;"></div><div class="t" style="top:478.15px;font-size:14px;line-height:14px;color:#000;letter-spacing:0.2px;margin-right:-0.2px;right:1162px;text-align:right;">10</div><div class="a" style="left:26px;top:495px;width:1084px;height:1px;background:#c3c3c3;"></div><div class="t" style="top:477.15px;font-size:14px;line-height:14px;color:#000;letter-spacing:0.2px;margin-right:-0.2px;right:1093px;text-align:right;">3,33</div><div class="t" style="top:477.15px;font-size:14px;line-height:14px;color:#000;letter-spacing:-0.31px;left:98px;">3M ITALIA SPA - PULIZIA CASA</div><div class="t" style="top:477.15px;font-size:14px;line-height:14px;color:#000;letter-spacing:0.2px;margin-right:-0.2px;right:788px;text-align:right;">109280</div><div class="t" style="top:477.15px;font-size:14px;line-height:14px;color:#000;letter-spacing:0.2px;margin-right:-0.2px;right:707px;text-align:right;">01.09.2020</div><div class="t" style="top:477.15px;font-size:14px;line-height:14px;color:#000;left:484px;">A</div><div class="t" style="top:477.15px;font-size:14px;line-height:14px;color:#000;letter-spacing:0.2px;margin-right:-0.2px;right:617px;text-align:right;">5</div><div class="t" style="top:477.15px;font-size:14px;line-height:14px;color:#000;letter-spacing:0.2px;margin-right:-0.2px;right:536px;text-align:right;">31.08.2020</div><div class="t" style="top:477.15px;font-size:14px;line-height:14px;color:#000;letter-spacing:0.2px;margin-right:-0.2px;right:414.20000000000005px;text-align:right;">27,70</div><div class="t" style="top:477.15px;font-size:14px;line-height:14px;color:#000;letter-spacing:0.2px;margin-right:-0.2px;right:340px;text-align:right;">27,70-</div><div class="t" style="top:477.15px;font-size:14px;line-height:14px;color:#000;letter-spacing:0.2px;margin-right:-0.2px;right:81.20000000000005px;text-align:right;">28,88</div><div class="a" style="left:26px;top:496px;width:1084px;height:24px;background:#dcdcdc;"></div><div class="a" style="left:0px;top:496px;width:25px;height:23px;background:#f0f0f0;"></div><div class="a" style="left:0px;top:496px;width:25px;height:1px;background:#fff;"></div><div class="a" style="left:0px;top:496px;width:1px;height:23px;background:#fff;"></div><div class="a" style="left:1px;top:519px;width:24px;height:1px;background:#6d6d6d;"></div><div class="t" style="top:502.15px;font-size:14px;line-height:14px;color:#000;letter-spacing:0.2px;margin-right:-0.2px;right:1162px;text-align:right;">10</div><div class="a" style="left:26px;top:519px;width:1084px;height:1px;background:#c3c3c3;"></div><div class="t" style="top:501.15px;font-size:14px;line-height:14px;color:#000;letter-spacing:0.2px;margin-right:-0.2px;right:483.20000000000005px;text-align:right;">0,00</div><div class="t" style="top:501.15px;font-size:14px;line-height:14px;color:#000;letter-spacing:0.2px;margin-right:-0.2px;right:414.20000000000005px;text-align:right;">32,95</div><div class="t" style="top:501.15px;font-size:14px;line-height:14px;color:#000;letter-spacing:0.2px;margin-right:-0.2px;right:340px;text-align:right;">32,95-</div><div class="t" style="top:501.15px;font-size:14px;line-height:14px;color:#000;letter-spacing:0.2px;margin-right:-0.2px;right:276.20000000000005px;text-align:right;">0,00</div><div class="t" style="top:501.15px;font-size:14px;line-height:14px;color:#000;letter-spacing:0.2px;margin-right:-0.2px;right:81.20000000000005px;text-align:right;">57,76</div><div class="a" style="left:26px;top:520px;width:1084px;height:24px;background:#fff;"></div><div class="a" style="left:0px;top:520px;width:25px;height:23px;background:#f0f0f0;"></div><div class="a" style="left:0px;top:520px;width:25px;height:1px;background:#fff;"></div><div class="a" style="left:0px;top:520px;width:1px;height:23px;background:#fff;"></div><div class="a" style="left:1px;top:543px;width:24px;height:1px;background:#6d6d6d;"></div><div class="t" style="top:526.15px;font-size:14px;line-height:14px;color:#000;letter-spacing:0.2px;margin-right:-0.2px;right:1162px;text-align:right;">11</div><div class="a" style="left:26px;top:543px;width:1084px;height:1px;background:#c3c3c3;"></div><div class="t" style="top:525.15px;font-size:14px;line-height:14px;color:#000;letter-spacing:0.2px;margin-right:-0.2px;right:1093px;text-align:right;">5,33</div><div class="t" style="top:525.15px;font-size:14px;line-height:14px;color:#000;letter-spacing:-0.24px;left:98px;">A &amp; D SPA - DIV. BIOFUNCTION</div><div class="t" style="top:525.15px;font-size:14px;line-height:14px;color:#000;letter-spacing:0.2px;margin-right:-0.2px;right:788px;text-align:right;">109289</div><div class="t" style="top:525.15px;font-size:14px;line-height:14px;color:#000;letter-spacing:0.2px;margin-right:-0.2px;right:707px;text-align:right;">02.09.2020</div><div class="t" style="top:525.15px;font-size:14px;line-height:14px;color:#000;left:484px;">A</div><div class="t" style="top:525.15px;font-size:14px;line-height:14px;color:#000;letter-spacing:0.2px;margin-right:-0.2px;right:617px;text-align:right;">9</div><div class="t" style="top:525.15px;font-size:14px;line-height:14px;color:#000;letter-spacing:0.2px;margin-right:-0.2px;right:536px;text-align:right;">02.09.2020</div><div class="t" style="top:525.15px;font-size:14px;line-height:14px;color:#000;letter-spacing:0.2px;margin-right:-0.2px;right:414.20000000000005px;text-align:right;">804,00</div><div class="t" style="top:525.15px;font-size:14px;line-height:14px;color:#000;letter-spacing:0.2px;margin-right:-0.2px;right:340px;text-align:right;">804,00-</div><div class="a" style="left:26px;top:544px;width:1084px;height:24px;background:#fff;"></div><div class="a" style="left:0px;top:544px;width:25px;height:23px;background:#f0f0f0;"></div><div class="a" style="left:0px;top:544px;width:25px;height:1px;background:#fff;"></div><div class="a" style="left:0px;top:544px;width:1px;height:23px;background:#fff;"></div><div class="a" style="left:1px;top:567px;width:24px;height:1px;background:#6d6d6d;"></div><div class="t" style="top:550.15px;font-size:14px;line-height:14px;color:#000;letter-spacing:0.2px;margin-right:-0.2px;right:1162px;text-align:right;">12</div><div class="a" style="left:26px;top:567px;width:1084px;height:1px;background:#c3c3c3;"></div><div class="t" style="top:549.15px;font-size:14px;line-height:14px;color:#000;letter-spacing:0.2px;margin-right:-0.2px;right:1093px;text-align:right;">5,33</div><div class="t" style="top:549.15px;font-size:14px;line-height:14px;color:#000;letter-spacing:-0.24px;left:98px;">A &amp; D SPA - DIV. BIOFUNCTION</div><div class="t" style="top:549.15px;font-size:14px;line-height:14px;color:#000;letter-spacing:0.2px;margin-right:-0.2px;right:788px;text-align:right;">109291</div><div class="t" style="top:549.15px;font-size:14px;line-height:14px;color:#000;letter-spacing:0.2px;margin-right:-0.2px;right:707px;text-align:right;">02.09.2020</div><div class="t" style="top:549.15px;font-size:14px;line-height:14px;color:#000;left:484px;">A</div><div class="t" style="top:549.15px;font-size:14px;line-height:14px;color:#000;letter-spacing:0.2px;margin-right:-0.2px;right:617px;text-align:right;">665</div><div class="t" style="top:549.15px;font-size:14px;line-height:14px;color:#000;letter-spacing:0.2px;margin-right:-0.2px;right:536px;text-align:right;">02.09.2020</div><div class="t" style="top:549.15px;font-size:14px;line-height:14px;color:#000;letter-spacing:0.2px;margin-right:-0.2px;right:414.20000000000005px;text-align:right;">45,00</div><div class="t" style="top:549.15px;font-size:14px;line-height:14px;color:#000;letter-spacing:0.2px;margin-right:-0.2px;right:340px;text-align:right;">45,00-</div><div class="a" style="left:26px;top:568px;width:1084px;height:24px;background:#dcdcdc;"></div><div class="a" style="left:0px;top:568px;width:25px;height:23px;background:#f0f0f0;"></div><div class="a" style="left:0px;top:568px;width:25px;height:1px;background:#fff;"></div><div class="a" style="left:0px;top:568px;width:1px;height:23px;background:#fff;"></div><div class="a" style="left:1px;top:591px;width:24px;height:1px;background:#6d6d6d;"></div><div class="t" style="top:574.15px;font-size:14px;line-height:14px;color:#000;letter-spacing:0.2px;margin-right:-0.2px;right:1162px;text-align:right;">12</div><div class="a" style="left:26px;top:591px;width:1084px;height:1px;background:#c3c3c3;"></div><div class="t" style="top:573.15px;font-size:14px;line-height:14px;color:#000;letter-spacing:0.2px;margin-right:-0.2px;right:483.20000000000005px;text-align:right;">0,00</div><div class="t" style="top:573.15px;font-size:14px;line-height:14px;color:#000;letter-spacing:0.2px;margin-right:-0.2px;right:414.20000000000005px;text-align:right;">849,00</div><div class="t" style="top:573.15px;font-size:14px;line-height:14px;color:#000;letter-spacing:0.2px;margin-right:-0.2px;right:340px;text-align:right;">849,00-</div><div class="t" style="top:573.15px;font-size:14px;line-height:14px;color:#000;letter-spacing:0.2px;margin-right:-0.2px;right:276.20000000000005px;text-align:right;">0,00</div><div class="t" style="top:573.15px;font-size:14px;line-height:14px;color:#000;letter-spacing:0.2px;margin-right:-0.2px;right:81.20000000000005px;text-align:right;">0,00</div><div class="a" style="left:26px;top:592px;width:1084px;height:24px;background:#fff;"></div><div class="a" style="left:0px;top:592px;width:25px;height:23px;background:#f0f0f0;"></div><div class="a" style="left:0px;top:592px;width:25px;height:1px;background:#fff;"></div><div class="a" style="left:0px;top:592px;width:1px;height:23px;background:#fff;"></div><div class="a" style="left:1px;top:615px;width:24px;height:1px;background:#6d6d6d;"></div><div class="t" style="top:598.15px;font-size:14px;line-height:14px;color:#000;letter-spacing:0.2px;margin-right:-0.2px;right:1162px;text-align:right;">13</div><div class="a" style="left:26px;top:615px;width:1084px;height:1px;background:#c3c3c3;"></div><div class="t" style="top:597.15px;font-size:14px;line-height:14px;color:#000;letter-spacing:0.2px;margin-right:-0.2px;right:1093px;text-align:right;">6,33</div><div class="t" style="top:597.15px;font-size:14px;line-height:14px;color:#000;letter-spacing:-0.2px;left:98px;">A &amp; D SPA - DIV. DIETETICI</div><div class="t" style="top:597.15px;font-size:14px;line-height:14px;color:#000;letter-spacing:0.2px;margin-right:-0.2px;right:788px;text-align:right;">109293</div><div class="t" style="top:597.15px;font-size:14px;line-height:14px;color:#000;letter-spacing:0.2px;margin-right:-0.2px;right:707px;text-align:right;">02.09.2020</div><div class="t" style="top:597.15px;font-size:14px;line-height:14px;color:#000;left:484px;">A</div><div class="t" style="top:597.15px;font-size:14px;line-height:14px;color:#000;letter-spacing:0.2px;margin-right:-0.2px;right:617px;text-align:right;">85</div><div class="t" style="top:597.15px;font-size:14px;line-height:14px;color:#000;letter-spacing:0.2px;margin-right:-0.2px;right:536px;text-align:right;">02.09.2020</div><div class="t" style="top:597.15px;font-size:14px;line-height:14px;color:#000;letter-spacing:0.2px;margin-right:-0.2px;right:414.20000000000005px;text-align:right;">477,60</div><div class="t" style="top:597.15px;font-size:14px;line-height:14px;color:#000;letter-spacing:0.2px;margin-right:-0.2px;right:340px;text-align:right;">477,60-</div><div class="a" style="left:26px;top:616px;width:1084px;height:24px;background:#dcdcdc;"></div><div class="a" style="left:0px;top:616px;width:25px;height:23px;background:#f0f0f0;"></div><div class="a" style="left:0px;top:616px;width:25px;height:1px;background:#fff;"></div><div class="a" style="left:0px;top:616px;width:1px;height:23px;background:#fff;"></div><div class="a" style="left:1px;top:639px;width:24px;height:1px;background:#6d6d6d;"></div><div class="t" style="top:622.15px;font-size:14px;line-height:14px;color:#000;letter-spacing:0.2px;margin-right:-0.2px;right:1162px;text-align:right;">13</div><div class="a" style="left:26px;top:639px;width:1084px;height:1px;background:#c3c3c3;"></div><div class="t" style="top:621.15px;font-size:14px;line-height:14px;color:#000;letter-spacing:0.2px;margin-right:-0.2px;right:483.20000000000005px;text-align:right;">0,00</div><div class="t" style="top:621.15px;font-size:14px;line-height:14px;color:#000;letter-spacing:0.2px;margin-right:-0.2px;right:414.20000000000005px;text-align:right;">477,60</div><div class="t" style="top:621.15px;font-size:14px;line-height:14px;color:#000;letter-spacing:0.2px;margin-right:-0.2px;right:340px;text-align:right;">477,60-</div><div class="t" style="top:621.15px;font-size:14px;line-height:14px;color:#000;letter-spacing:0.2px;margin-right:-0.2px;right:276.20000000000005px;text-align:right;">0,00</div><div class="t" style="top:621.15px;font-size:14px;line-height:14px;color:#000;letter-spacing:0.2px;margin-right:-0.2px;right:81.20000000000005px;text-align:right;">0,00</div><div class="a" style="left:26px;top:640px;width:1084px;height:24px;background:#fff;"></div><div class="a" style="left:0px;top:640px;width:25px;height:23px;background:#f0f0f0;"></div><div class="a" style="left:0px;top:640px;width:25px;height:1px;background:#fff;"></div><div class="a" style="left:0px;top:640px;width:1px;height:23px;background:#fff;"></div><div class="a" style="left:1px;top:663px;width:24px;height:1px;background:#6d6d6d;"></div><div class="t" style="top:646.15px;font-size:14px;line-height:14px;color:#000;letter-spacing:0.2px;margin-right:-0.2px;right:1162px;text-align:right;">14</div><div class="a" style="left:26px;top:663px;width:1084px;height:1px;background:#c3c3c3;"></div><div class="t" style="top:645.15px;font-size:14px;line-height:14px;color:#000;letter-spacing:0.2px;margin-right:-0.2px;right:1093px;text-align:right;">10,33</div><div class="t" style="top:645.15px;font-size:14px;line-height:14px;color:#000;letter-spacing:-0.27px;left:98px;">AIA - AGRICOLA ITALIANA ALIM. SPA</div><div class="t" style="top:645.15px;font-size:14px;line-height:14px;color:#000;letter-spacing:0.2px;margin-right:-0.2px;right:788px;text-align:right;">109296</div><div class="t" style="top:645.15px;font-size:14px;line-height:14px;color:#000;letter-spacing:0.2px;margin-right:-0.2px;right:707px;text-align:right;">02.09.2020</div><div class="t" style="top:645.15px;font-size:14px;line-height:14px;color:#000;left:484px;">A</div><div class="t" style="top:645.15px;font-size:14px;line-height:14px;color:#000;letter-spacing:0.2px;margin-right:-0.2px;right:617px;text-align:right;">1581</div><div class="t" style="top:645.15px;font-size:14px;line-height:14px;color:#000;letter-spacing:0.2px;margin-right:-0.2px;right:536px;text-align:right;">02.09.2020</div><div class="t" style="top:645.15px;font-size:14px;line-height:14px;color:#000;letter-spacing:0.2px;margin-right:-0.2px;right:483.20000000000005px;text-align:right;">864,40</div><div class="t" style="top:645.15px;font-size:14px;line-height:14px;color:#000;letter-spacing:0.2px;margin-right:-0.2px;right:414.20000000000005px;text-align:right;">808,20</div><div class="t" style="top:645.15px;font-size:14px;line-height:14px;color:#000;letter-spacing:0.2px;margin-right:-0.2px;right:344.20000000000005px;text-align:right;">56,20</div><div class="a" style="left:26px;top:664px;width:1084px;height:24px;background:#dcdcdc;"></div><div class="a" style="left:0px;top:664px;width:25px;height:23px;background:#f0f0f0;"></div><div class="a" style="left:0px;top:664px;width:25px;height:1px;background:#fff;"></div><div class="a" style="left:0px;top:664px;width:1px;height:23px;background:#fff;"></div><div class="a" style="left:1px;top:687px;width:24px;height:1px;background:#6d6d6d;"></div><div class="t" style="top:670.15px;font-size:14px;line-height:14px;color:#000;letter-spacing:0.2px;margin-right:-0.2px;right:1162px;text-align:right;">14</div><div class="a" style="left:26px;top:687px;width:1084px;height:1px;background:#c3c3c3;"></div><div class="t" style="top:669.15px;font-size:14px;line-height:14px;color:#000;letter-spacing:0.2px;margin-right:-0.2px;right:483.20000000000005px;text-align:right;">864,40</div><div class="t" style="top:669.15px;font-size:14px;line-height:14px;color:#000;letter-spacing:0.2px;margin-right:-0.2px;right:414.20000000000005px;text-align:right;">808,20</div><div class="t" style="top:669.15px;font-size:14px;line-height:14px;color:#000;letter-spacing:0.2px;margin-right:-0.2px;right:344.20000000000005px;text-align:right;">56,20</div><div class="t" style="top:669.15px;font-size:14px;line-height:14px;color:#000;letter-spacing:0.2px;margin-right:-0.2px;right:276.20000000000005px;text-align:right;">0,00</div><div class="t" style="top:669.15px;font-size:14px;line-height:14px;color:#000;letter-spacing:0.2px;margin-right:-0.2px;right:81.20000000000005px;text-align:right;">0,00</div><div class="a" style="left:26px;top:688px;width:1084px;height:24px;background:#dcdcdc;"></div><div class="a" style="left:0px;top:688px;width:25px;height:23px;background:#f0f0f0;"></div><div class="a" style="left:0px;top:688px;width:25px;height:1px;background:#fff;"></div><div class="a" style="left:0px;top:688px;width:1px;height:23px;background:#fff;"></div><div class="a" style="left:1px;top:711px;width:24px;height:1px;background:#6d6d6d;"></div><div class="a" style="left:26px;top:711px;width:1084px;height:1px;background:#c3c3c3;"></div><div class="t" style="top:693.15px;font-size:14px;line-height:14px;color:#000;font-weight:bold;letter-spacing:0.2px;margin-right:-0.2px;right:483.20000000000005px;text-align:right;">864,40</div><div class="t" style="top:693.15px;font-size:14px;line-height:14px;color:#000;font-weight:bold;letter-spacing:0.2px;margin-right:-0.2px;right:414.20000000000005px;text-align:right;">2.549,29</div><div class="t" style="top:693.15px;font-size:14px;line-height:14px;color:#000;font-weight:bold;letter-spacing:0.2px;margin-right:-0.2px;right:340px;text-align:right;">1.684,89-</div><div class="t" style="top:693.15px;font-size:14px;line-height:14px;color:#000;font-weight:bold;letter-spacing:0.2px;margin-right:-0.2px;right:276.20000000000005px;text-align:right;">0,00</div><div class="t" style="top:693.15px;font-size:14px;line-height:14px;color:#000;font-weight:bold;letter-spacing:0.2px;margin-right:-0.2px;right:81.20000000000005px;text-align:right;">387,11</div><div class="a" style="left:0px;top:184px;width:1px;height:528px;background:#fff;"></div><div class="a" style="left:25px;top:208px;width:1px;height:504px;background:#6d6d6d;"></div><div class="a" style="left:93px;top:208px;width:1px;height:504px;background:#c3c3c3;"></div><div class="a" style="left:340px;top:208px;width:1px;height:504px;background:#c3c3c3;"></div><div class="a" style="left:398px;top:208px;width:1px;height:504px;background:#c3c3c3;"></div><div class="a" style="left:479px;top:208px;width:1px;height:504px;background:#c3c3c3;"></div><div class="a" style="left:498px;top:208px;width:1px;height:504px;background:#c3c3c3;"></div><div class="a" style="left:569px;top:208px;width:1px;height:504px;background:#c3c3c3;"></div><div class="a" style="left:650px;top:208px;width:1px;height:504px;background:#c3c3c3;"></div><div class="a" style="left:707px;top:208px;width:1px;height:504px;background:#c3c3c3;"></div><div class="a" style="left:776px;top:208px;width:1px;height:504px;background:#c3c3c3;"></div><div class="a" style="left:846px;top:208px;width:1px;height:504px;background:#c3c3c3;"></div><div class="a" style="left:914px;top:208px;width:1px;height:504px;background:#c3c3c3;"></div><div class="a" style="left:971px;top:208px;width:1px;height:504px;background:#c3c3c3;"></div><div class="a" style="left:1052px;top:208px;width:1px;height:504px;background:#c3c3c3;"></div><div class="a" style="left:1109px;top:208px;width:1px;height:504px;background:#c3c3c3;"></div>
</body></html>
